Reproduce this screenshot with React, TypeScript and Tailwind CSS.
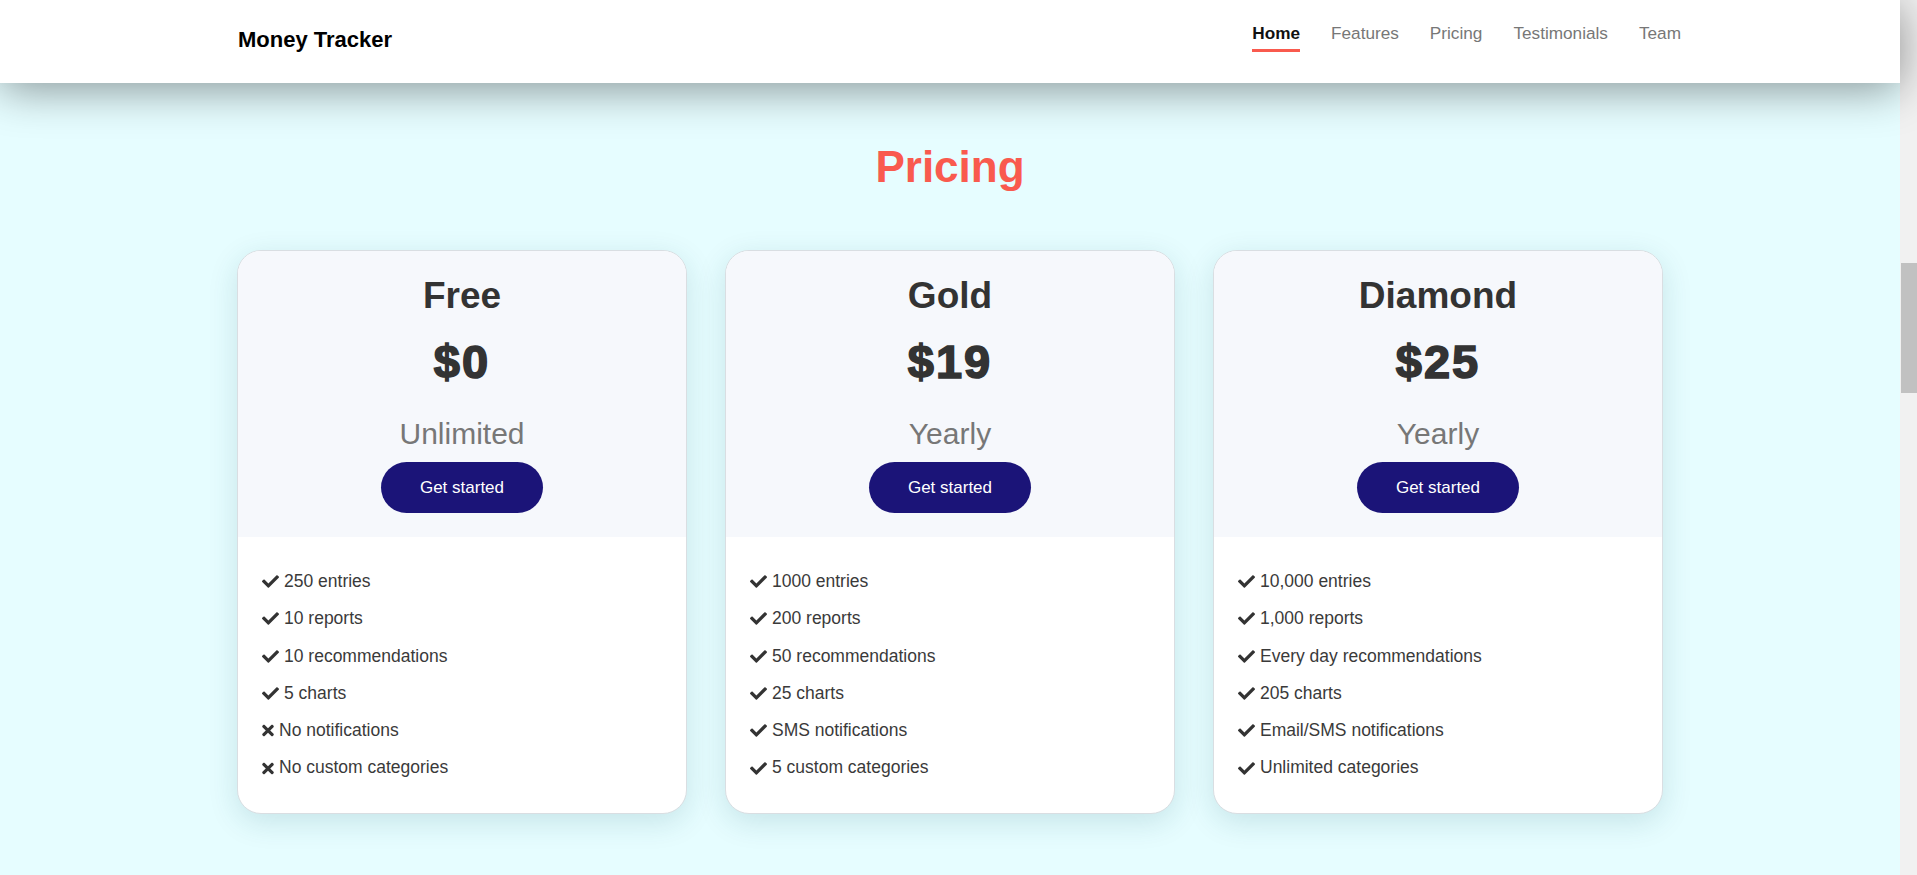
import { FaCheck, FaTimes } from 'react-icons/fa'

type Feature = { text: string; ok: boolean }

type Plan = {
  name: string
  price: string
  period: string
  features: Feature[]
}

const NAV_LINKS = ['Home', 'Features', 'Pricing', 'Testimonials', 'Team']

const PLANS: Plan[] = [
  {
    name: 'Free',
    price: '$0',
    period: 'Unlimited',
    features: [
      { text: '250 entries', ok: true },
      { text: '10 reports', ok: true },
      { text: '10 recommendations', ok: true },
      { text: '5 charts', ok: true },
      { text: 'No notifications', ok: false },
      { text: 'No custom categories', ok: false },
    ],
  },
  {
    name: 'Gold',
    price: '$19',
    period: 'Yearly',
    features: [
      { text: '1000 entries', ok: true },
      { text: '200 reports', ok: true },
      { text: '50 recommendations', ok: true },
      { text: '25 charts', ok: true },
      { text: 'SMS notifications', ok: true },
      { text: '5 custom categories', ok: true },
    ],
  },
  {
    name: 'Diamond',
    price: '$25',
    period: 'Yearly',
    features: [
      { text: '10,000 entries', ok: true },
      { text: '1,000 reports', ok: true },
      { text: 'Every day recommendations', ok: true },
      { text: '205 charts', ok: true },
      { text: 'Email/SMS notifications', ok: true },
      { text: 'Unlimited categories', ok: true },
    ],
  },
]

function Navbar() {
  return (
    <header className="relative z-10 flex h-[83px] shrink-0 items-start justify-between bg-white pl-[238px] pr-[219px] shadow-[0_6px_45px_rgba(0,0,0,0.42)]">
      <div className="mt-[27px] text-[22px] font-bold leading-[25px] text-black">Money Tracker</div>
      <nav className="mt-[23px] flex gap-[31px]">
        {NAV_LINKS.map((link) => {
          const active = link === 'Home'
          return (
            <a key={link} href={`#${link.toLowerCase()}`} className="flex flex-col">
              <span className={`text-[17.2px] leading-[20px] ${active ? 'font-bold text-[#111]' : 'text-[#777]'}`}>
                {link}
              </span>
              {active && <span className="mt-[6px] h-[3px] w-full bg-[#f95a4e]" />}
            </a>
          )
        })}
      </nav>
    </header>
  )
}

function PlanCard({ plan }: { plan: Plan }) {
  return (
    <div className="overflow-hidden rounded-[24px] border border-[#d9dee2] bg-white shadow-[0_8px_30px_rgba(0,80,90,0.14)]">
      <div className="flex flex-col items-center bg-[#f6f8fc] pb-[24px] pt-[24px]">
        <h3 className="text-[37px] font-bold leading-[41px] text-[#333]">{plan.name}</h3>
        <div className="mt-[20px] text-[47px] font-bold leading-[52px] tracking-[2px] text-[#333] [-webkit-text-stroke:1.6px_#333333]">
          {plan.price}
        </div>
        <div className="mt-[28px] text-[30px] leading-[36px] text-[#777]">{plan.period}</div>
        <button className="mt-[10px] h-[51px] rounded-full bg-[#1b1478] px-[39px] text-[17px] text-white">
          Get started
        </button>
      </div>
      <ul className="pb-[26px] pl-[24px] pt-[26px]">
        {plan.features.map((f) => (
          <li key={f.text} className="flex items-center gap-[5px] text-[17.5px] leading-[37.3px] text-[#3a3a3a]">
            {f.ok ? <FaCheck className="h-[17px] w-[17px] text-[#333]" /> : <FaTimes className="h-[17px] w-[12px] text-[#333]" />}
            <span>{f.text}</span>
          </li>
        ))}
      </ul>
    </div>
  )
}

function Scrollbar() {
  // page is scrolled down to the pricing section
  return (
    <div className="w-[17px] shrink-0 bg-[#f1f1f1]">
      <div className="ml-px mt-[263px] h-[130px] bg-[#c1c1c1]" />
    </div>
  )
}

export default function App() {
  return (
    <div className="flex h-screen overflow-hidden bg-[#e6fdff] font-['Liberation_Sans',Arial,sans-serif]">
      <div className="flex min-w-0 flex-1 flex-col">
        <Navbar />
        <section id="pricing" className="pb-[60px] pt-[59px]">
          <h2 className="text-center text-[44px] font-bold leading-[50px] text-[#f95a4e]">Pricing</h2>
          <div className="mx-auto mt-[58px] grid w-[1426px] grid-cols-3 gap-[38px]">
            {PLANS.map((plan) => (
              <PlanCard key={plan.name} plan={plan} />
            ))}
          </div>
        </section>
      </div>
      <Scrollbar />
    </div>
  )
}
